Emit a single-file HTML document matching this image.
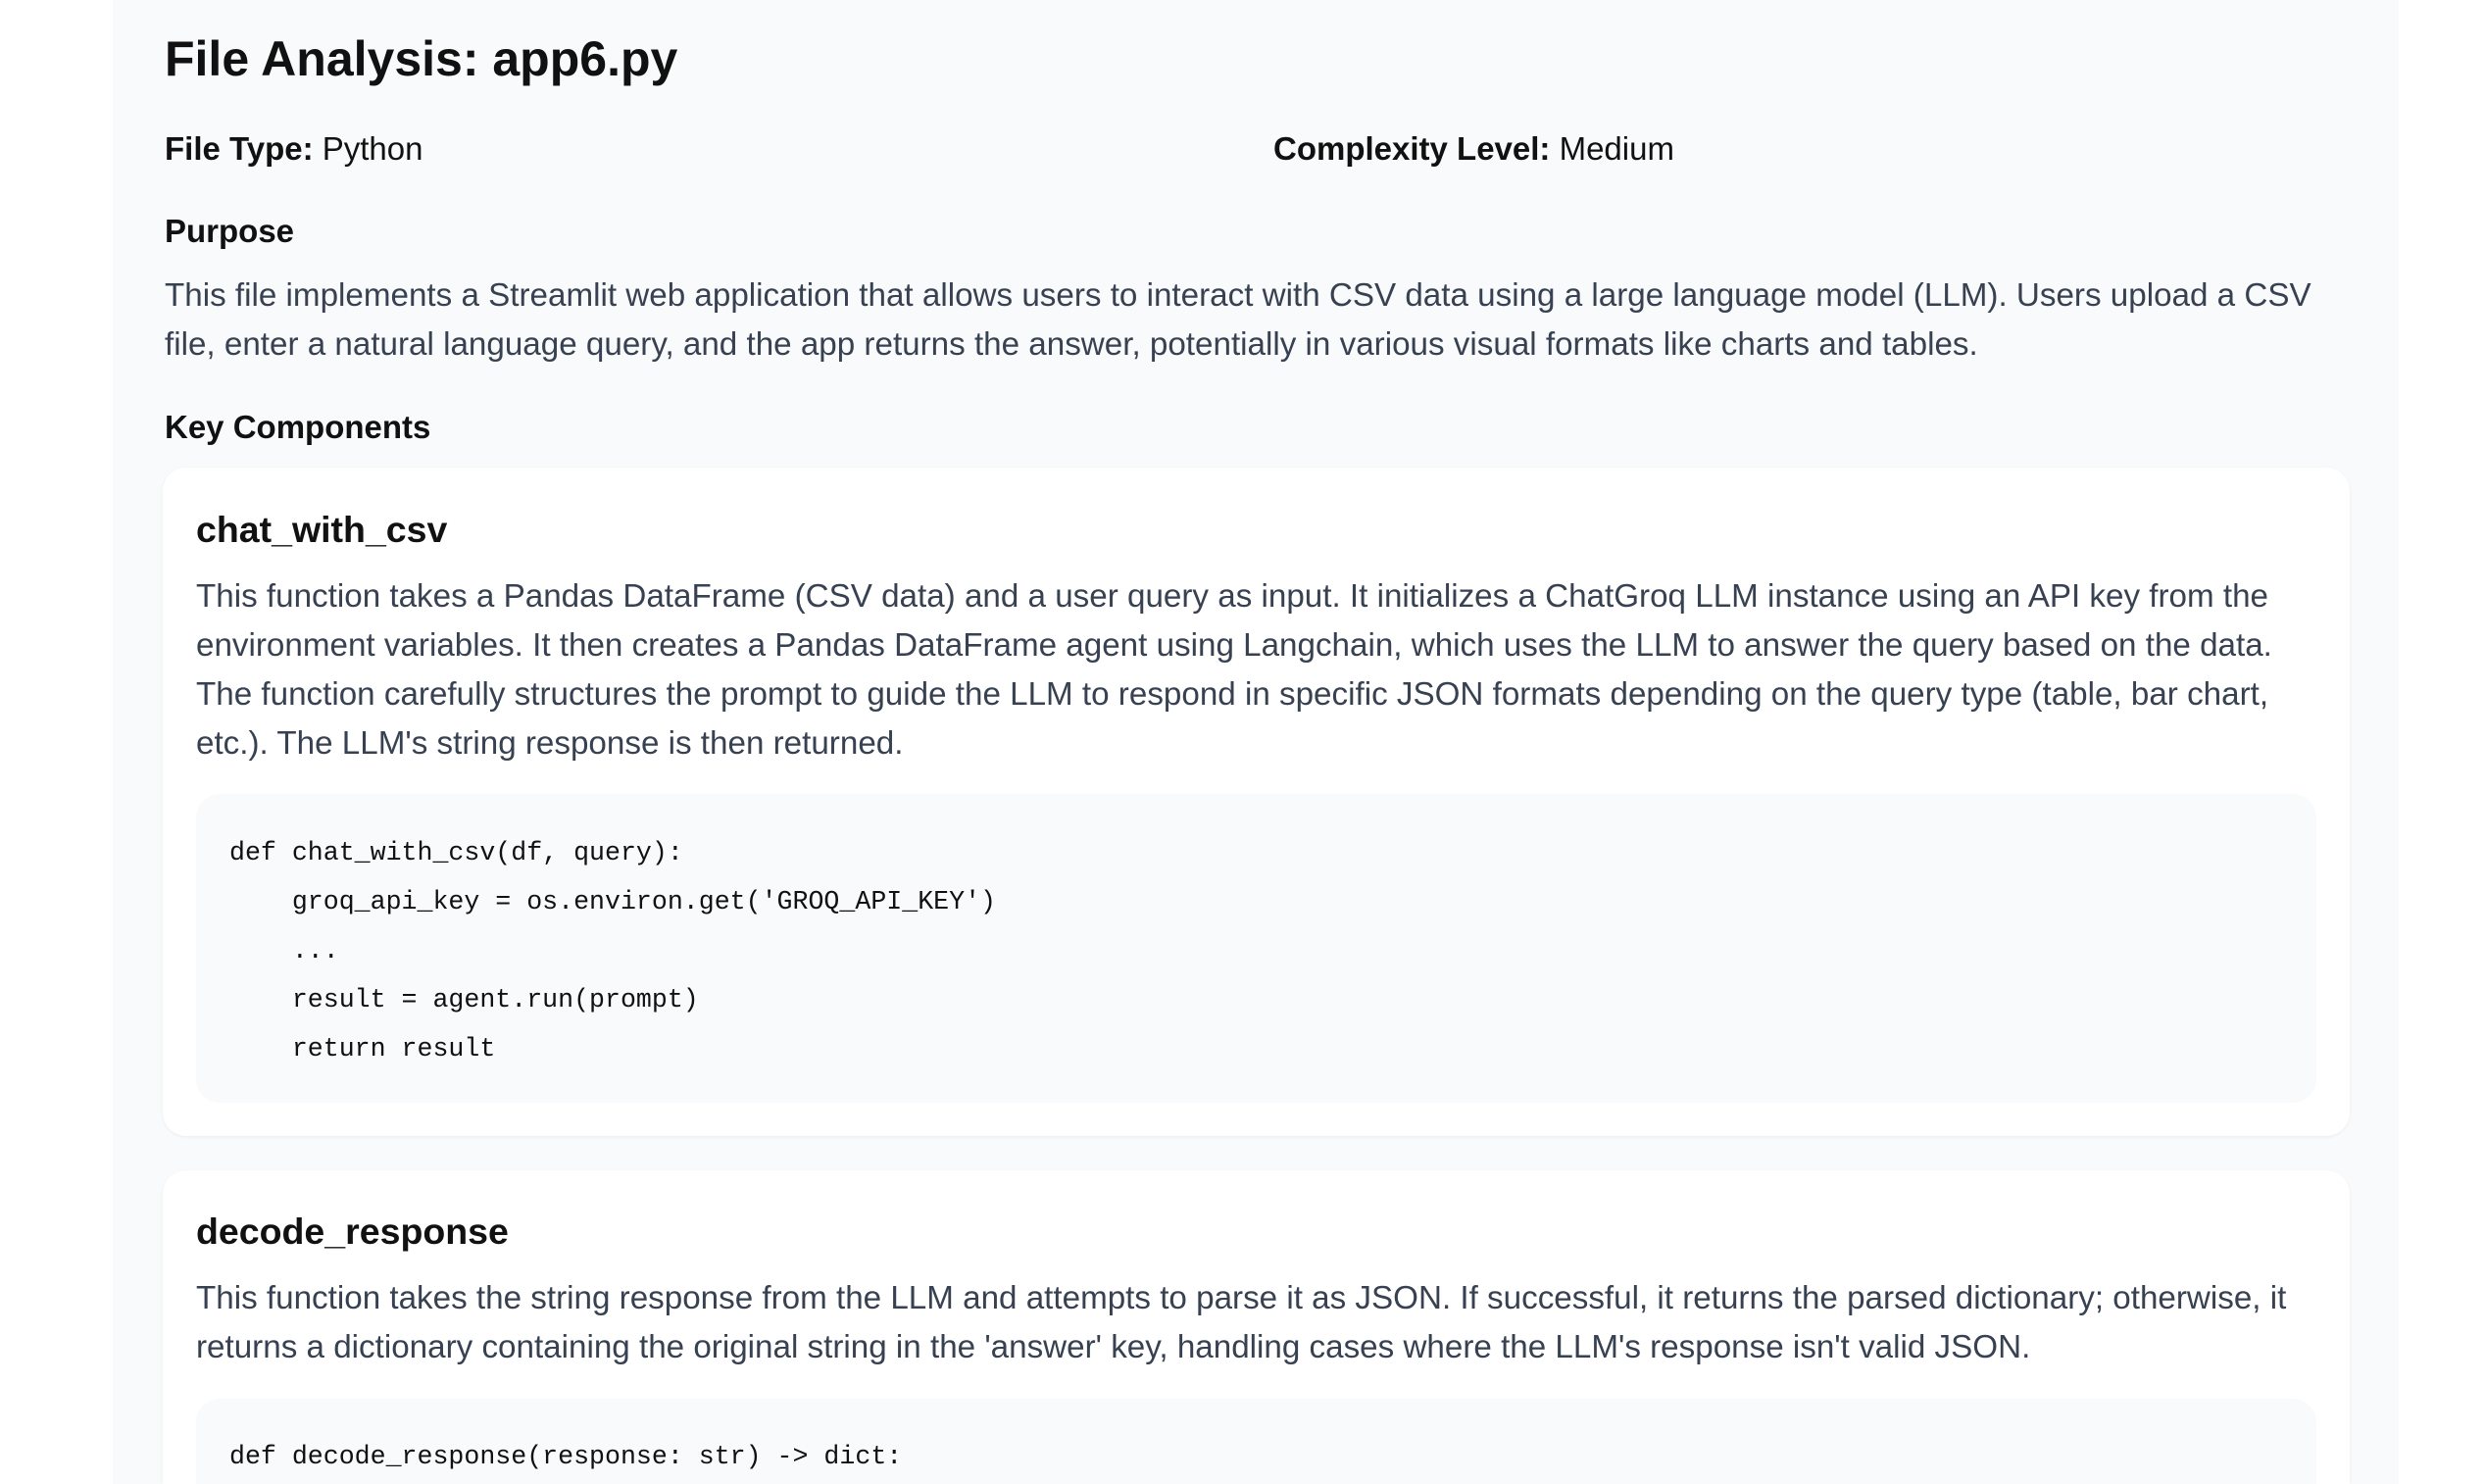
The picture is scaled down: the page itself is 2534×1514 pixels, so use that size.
<!DOCTYPE html>
<html style="margin:0;width:2534px;height:1514px;overflow:hidden"><head><meta charset="utf-8"><style>
body{margin:0;width:2534px;height:1514px;background:#fff;overflow:hidden;font-family:"Liberation Sans",Arial,sans-serif;position:relative}
.panel{position:absolute;left:115px;top:0;width:2332px;height:1514px;background:#f9fafb}
.a{position:absolute;white-space:nowrap}
.h{color:#111;font-weight:bold}
.p{color:#374151;font-size:33.2px;line-height:50px}
.card{position:absolute;left:166px;width:2231px;background:#fff;border-radius:24px;box-shadow:0 1px 3px rgba(0,0,0,0.06)}
.code{position:absolute;left:200px;width:2163px;background:#f9fafb;border-radius:24px}
.m{font-family:"Liberation Mono","DejaVu Sans Mono",monospace;font-size:26.6px;color:#111;line-height:50px;white-space:pre}
</style></head><body>
<div class="panel"></div>
<div class="a h" style="left:168px;top:30px;font-size:50px;line-height:60px">File Analysis: app6.py</div>
<div class="a" style="left:168px;top:127px;font-size:33px;line-height:50px;color:#111"><b>File Type:</b> Python</div>
<div class="a" style="left:1299px;top:127px;font-size:33px;line-height:50px;color:#111"><b>Complexity Level:</b> Medium</div>
<div class="a h" style="left:168px;top:211px;font-size:33px;line-height:50px">Purpose</div>
<div class="a p" style="left:168px;top:277px">This file implements a Streamlit web application that allows users to interact with CSV data using a large language model (LLM). Users upload a CSV<br>file, enter a natural language query, and the app returns the answer, potentially in various visual formats like charts and tables.</div>
<div class="a h" style="left:168px;top:411px;font-size:33px;line-height:50px">Key Components</div>

<div class="card" style="top:477px;height:682px"></div>
<div class="a h" style="left:200px;top:515px;font-size:37.5px;line-height:50px">chat_with_csv</div>
<div class="a p" style="left:200px;top:584px">This function takes a Pandas DataFrame (CSV data) and a user query as input. It initializes a ChatGroq LLM instance using an API key from the<br>environment variables. It then creates a Pandas DataFrame agent using Langchain, which uses the LLM to answer the query based on the data.<br>The function carefully structures the prompt to guide the LLM to respond in specific JSON formats depending on the query type (table, bar chart,<br>etc.). The LLM's string response is then returned.</div>
<div class="code" style="top:810px;height:315px"></div>
<div class="a m" style="left:234px;top:845px">def chat_with_csv(df, query):
    groq_api_key = os.environ.get('GROQ_API_KEY')
    ...
    result = agent.run(prompt)
    return result</div>

<div class="card" style="top:1194px;height:320px;border-radius:24px 24px 0 0"></div>
<div class="a h" style="left:200px;top:1231px;font-size:37.5px;line-height:50px">decode_response</div>
<div class="a p" style="left:200px;top:1300px">This function takes the string response from the LLM and attempts to parse it as JSON. If successful, it returns the parsed dictionary; otherwise, it<br>returns a dictionary containing the original string in the 'answer' key, handling cases where the LLM's response isn't valid JSON.</div>
<div class="code" style="top:1427px;height:87px;border-radius:24px 24px 0 0"></div>
<div class="a m" style="left:234px;top:1461px">def decode_response(response: str) -&gt; dict:</div>
</body></html>
